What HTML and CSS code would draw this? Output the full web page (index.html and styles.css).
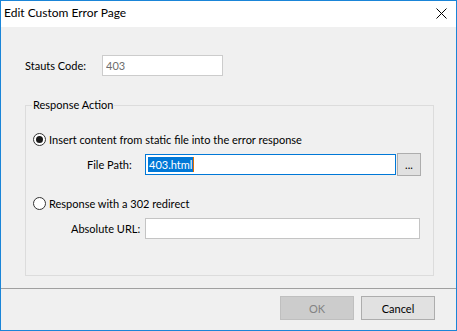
FILE: index.html
```html
<!DOCTYPE html>
<html lang="en">
<head>
    <meta charset="UTF-8">
    <title>Edit Custom Error Page</title>
    <link rel="stylesheet" href="styles.css">
</head>
<body>
    <div class="window">
        <!-- Title bar -->
        <div class="titlebar">
            <span class="title">Edit Custom Error Page</span>
            <svg class="close-icon" width="11" height="11" viewBox="0 0 11 11">
                <path d="M0.5 0.5 L10.5 10.5 M10.5 0.5 L0.5 10.5" stroke="#000" stroke-width="1" fill="none"/>
            </svg>
        </div>

        <div class="content">
            <div class="status-row">
                <label class="status-label">Stauts Code:</label>
                <input class="field status-input" type="text" value="403" readonly>
            </div>

            <fieldset class="group">
                <legend>Response Action</legend>

                <div class="radio-row first">
                    <span class="radio checked"></span>
                    <span>Insert content from static file into the error response</span>
                </div>
                <div class="field-row file-row">
                    <label class="file-label">File Path:</label>
                    <div class="field focused"><span class="selected">403.html</span><span class="caret"></span></div>
                    <button class="btn browse-btn">...</button>
                </div>

                <div class="radio-row second">
                    <span class="radio"></span>
                    <span>Response with a 302 redirect</span>
                </div>
                <div class="field-row url-row">
                    <label class="url-label">Absolute URL:</label>
                    <div class="field url-input"></div>
                </div>
            </fieldset>
        </div>

        <div class="footer">
            <button class="btn ok-btn" disabled>OK</button>
            <button class="btn cancel-btn">Cancel</button>
        </div>
    </div>
</body>
</html>
```

FILE: styles.css
```css
body {
    margin: 0;
    font-family: 'Lato', 'Noto Sans', sans-serif;
    font-size: 11px;
    color: #000;
    background-color: #f0f0f0;
}

.window {
    width: 457px;
    height: 331px;
    box-sizing: border-box;
    border: 1px solid #1a85d8;
    display: flex;
    flex-direction: column;
    background-color: #f0f0f0;
}

.titlebar {
    height: 26px;
    background-color: #fff;
    display: flex;
    align-items: center;
    justify-content: space-between;
    padding: 0 9px 0 3px;
}

.title {
    font-size: 12px;
    line-height: 16px;
    padding-bottom: 2px;
}

.close-icon {
    display: block;
    margin-bottom: 1px;
}

.content {
    flex: 1;
    padding: 28px 0 0 24px;
}

.status-row {
    display: flex;
    align-items: center;
    height: 21px;
}

.status-label {
    width: 77px;
    white-space: nowrap;
}

.field {
    box-sizing: border-box;
    height: 21px;
    border: 1px solid #c4c4c4;
    background-color: #fff;
    font-family: inherit;
    font-size: 11px;
    padding: 0 3px;
    margin: 0;
    outline: none;
    flex-shrink: 0;
}

.status-input {
    width: 121px;
    color: #6d6d6d;
    border-color: #cccccc;
}

.group {
    width: 409px;
    box-sizing: border-box;
    margin: 21px 0 0 0;
    padding: 0 0 36px 7px;
    border: 1px solid #dcdcdc;
    min-inline-size: 0;
}

.group legend {
    padding: 0 1px;
    margin-left: -1px;
    line-height: 16px;
}

.radio-row {
    display: flex;
    align-items: center;
    height: 16px;
}

.radio-row.first {
    margin-top: 18px;
}

.radio-row.second {
    margin-top: 19px;
}

.radio {
    width: 13px;
    height: 13px;
    box-sizing: border-box;
    border: 1px solid #333;
    border-radius: 50%;
    background-color: #fff;
    margin-right: 3px;
    display: flex;
    align-items: center;
    justify-content: center;
}

.radio.checked::after {
    content: '';
    width: 7px;
    height: 7px;
    border-radius: 50%;
    background-color: #1a1a1a;
}

.field-row {
    display: flex;
    align-items: center;
}

.file-row {
    margin-top: 6px;
    height: 23px;
}

.file-row label,
.url-row label {
    white-space: nowrap;
    flex-shrink: 0;
}

.file-label {
    margin-left: 54px;
    width: 58px;
}

.url-row {
    margin-top: 7px;
    height: 21px;
}

.url-label {
    margin-left: 38px;
    width: 74px;
}

.focused {
    width: 251px;
    border-color: #0078d7;
    display: flex;
    align-items: center;
    padding: 0 2px;
}

.selected {
    background-color: #0078d7;
    color: #fff;
    line-height: 15px;
    padding: 0 1px;
}

.caret {
    width: 1px;
    height: 15px;
    background-color: #e07000;
}

.url-input {
    width: 275px;
}

.btn {
    box-sizing: border-box;
    border: 1px solid #adadad;
    background-color: #e1e1e1;
    font-family: inherit;
    font-size: 11px;
    color: #000;
    padding: 0;
    margin: 0;
}

.browse-btn {
    width: 24px;
    height: 23px;
    margin-left: 1px;
    line-height: 17px;
}

.footer {
    height: 42px;
    box-sizing: border-box;
    border-top: 1px solid #a0a0a0;
    display: flex;
    justify-content: flex-end;
    gap: 7px;
    padding: 7px 21px 0 0;
}

.footer .btn {
    width: 74px;
    height: 24px;
}

.ok-btn {
    background-color: #cccccc;
    border-color: #bfbfbf;
    color: #838383;
}
```
